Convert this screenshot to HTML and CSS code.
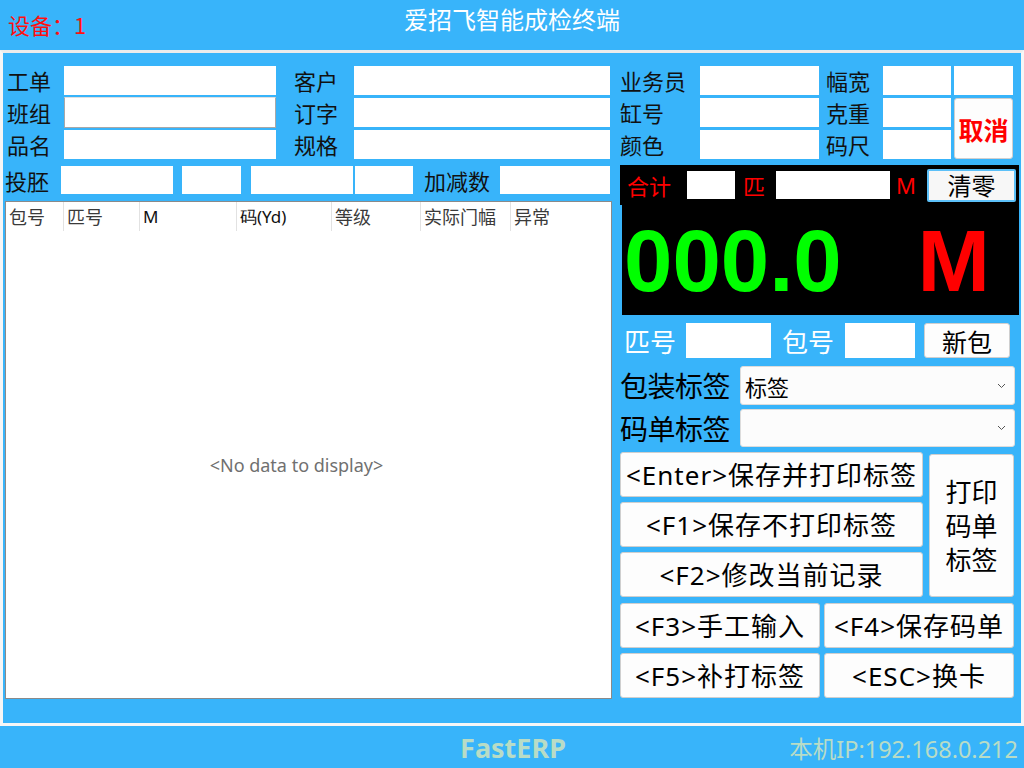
FILE: index.html
```html
<!DOCTYPE html>
<html lang="zh">
<head>
<meta charset="utf-8">
<title>爱招飞智能成检终端</title>
<link rel="stylesheet" href="styles.css">
</head>
<body>
<header class="topbar">
  <div class="device">设备：1</div>
  <div class="title">爱招飞智能成检终端</div>
  <div></div>
</header>
<main class="frame">
  <section class="left">
    <div class="form-grid">
      <label class="lbl">工单</label><div class="inp"></div>
      <label class="lbl lbl2">客户</label><div class="inp"></div>
      <label class="lbl">班组</label><div class="inp inp-focus"></div>
      <label class="lbl lbl2">订字</label><div class="inp"></div>
      <label class="lbl">品名</label><div class="inp"></div>
      <label class="lbl lbl2">规格</label><div class="inp"></div>
    </div>
    <div class="row4">
      <label class="lbl l-tp">投胚</label>
      <div class="inp w112"></div>
      <div class="inp w59"></div>
      <div class="inp w102"></div>
      <div class="inp w58"></div>
      <label class="lbl l-jj">加减数</label>
      <div class="inp w110"></div>
    </div>
    <div class="table">
      <div class="thead">
        <div class="th">包号</div>
        <div class="th">匹号</div>
        <div class="th latin">M</div>
        <div class="th latin">码(Yd)</div>
        <div class="th">等级</div>
        <div class="th">实际门幅</div>
        <div class="th last">异常</div>
      </div>
      <div class="tbody">&lt;No data to display&gt;</div>
    </div>
  </section>
  <section class="right">
    <div class="rgrid">
      <label class="lbl">业务员</label><div class="inp"></div>
      <label class="lbl lbl3">幅宽</label><div class="inp"></div>
      <div class="gap"></div><div class="inp"></div>
      <label class="lbl">缸号</label><div class="inp"></div>
      <label class="lbl lbl3">克重</label><div class="inp"></div>
      <div class="gap"></div><button class="btn cancel">取消</button>
      <label class="lbl">颜色</label><div class="inp"></div>
      <label class="lbl lbl3">码尺</label><div class="inp"></div>
    </div>
    <div class="meter">
      <div class="meter-bar">
        <span class="red-lbl hj">合计</span>
        <div class="inp w48"></div>
        <span class="red-lbl pi">匹</span>
        <div class="inp w114"></div>
        <span class="red-lbl m">M</span>
        <button class="btn clear">清零</button>
      </div>
      <div class="display">
        <span class="num">000.0</span>
        <span class="unit">M</span>
      </div>
    </div>
    <div class="pirow">
      <label class="wlbl l-ph">匹号</label>
      <div class="inp w85"></div>
      <label class="wlbl l-bh">包号</label>
      <div class="inp w70"></div>
      <button class="btn newpack">新包</button>
    </div>
    <div class="selrow s1">
      <label class="slbl">包装标签</label>
      <div class="select"><span>标签</span><svg class="chev" width="9" height="6" viewBox="0 0 9 6"><path d="M1 1 L4.5 4.5 L8 1" fill="none" stroke="#555" stroke-width="1"/></svg></div>
    </div>
    <div class="selrow s2">
      <label class="slbl">码单标签</label>
      <div class="select"><span></span><svg class="chev" width="9" height="6" viewBox="0 0 9 6"><path d="M1 1 L4.5 4.5 L8 1" fill="none" stroke="#555" stroke-width="1"/></svg></div>
    </div>
    <div class="btns-top">
      <button class="btn act">&lt;Enter&gt;保存并打印标签</button>
      <button class="btn act print">打印<br>码单<br>标签</button>
      <button class="btn act">&lt;F1&gt;保存不打印标签</button>
      <button class="btn act">&lt;F2&gt;修改当前记录</button>
    </div>
    <div class="btns-bot">
      <button class="btn act">&lt;F3&gt;手工输入</button>
      <button class="btn act">&lt;F4&gt;保存码单</button>
      <button class="btn act">&lt;F5&gt;补打标签</button>
      <button class="btn act">&lt;ESC&gt;换卡</button>
    </div>
  </section>
</main>
<footer class="footer">
  <div></div>
  <div class="brand">FastERP</div>
  <div class="ip">本机IP:192.168.0.212</div>
</footer>
</body>
</html>
```

FILE: styles.css
```css
* { box-sizing: border-box; margin: 0; padding: 0; }
html, body { width: 1024px; height: 768px; overflow: hidden; }
body {
  background: #38b4fa;
  font-family: "Noto Sans", "Noto Sans CJK SC", sans-serif;
  color: #000;
}
button { font-family: inherit; cursor: default; }

/* header */
.topbar {
  height: 50px;
  display: grid;
  grid-template-columns: 1fr auto 1fr;
}
.device {
  color: #ff1010;
  font-size: 22px;
  line-height: 30px;
  padding: 9px 0 0 8px;
  font-family: "Noto Sans CJK SC", sans-serif;
}
.title {
  color: #fff;
  font-size: 24px;
  line-height: 30px;
  padding-top: 4px;
  font-family: "Noto Sans CJK SC", sans-serif;
}

/* frame */
.frame {
  height: 676px;
  border: 3px solid #f6f6f6;
  border-top-color: #ececec;
  display: flex;
  gap: 8px;
}
.left {
  width: 609px;
  padding: 13px 0 0 2px;
}
.right {
  width: 401px;
  padding-top: 13px;
}

.lbl {
  font-family: "Noto Sans CJK SC", sans-serif;
  font-size: 22px;
  line-height: 29px;
  color: #111;
  white-space: nowrap;
}
.inp { background: #fff; height: 100%; }
.inp-focus { border: 1px solid #a8a8a8; border-top-color: #e0e0e0; margin: -1px 0; height: calc(100% + 2px); }

.form-grid {
  display: grid;
  grid-template-columns: 59px 212px 78px 256px;
  grid-template-rows: 29px 29px 29px;
  row-gap: 3px;
}
.form-grid .lbl { padding-left: 2px; }
.form-grid .lbl2 { padding-left: 18px; }

.row4 {
  margin-top: 7px;
  height: 28px;
  display: flex;
}
.row4 .lbl { line-height: 28px; }
.l-tp { width: 56px; }
.w112 { width: 112px; }
.w59 { width: 59px; margin-left: 9px; }
.w102 { width: 102px; margin-left: 10px; }
.w58 { width: 58px; margin-left: 2px; }
.l-jj { width: 87px; padding-left: 11px; }
.w110 { width: 110px; }

/* table */
.table {
  margin-top: 7px;
  height: 498px;
  width: 607px;
  background: #fff;
  border: 1px solid #8a8a8a;
  display: flex;
  flex-direction: column;
}
.thead {
  height: 29px;
  display: grid;
  grid-template-columns: 58px 76px 97px 95px 89px 90px 1fr;
}
.th {
  font-family: "Noto Sans CJK SC", sans-serif;
  font-size: 18px;
  line-height: 29px;
  color: #3a3a3a;
  padding-left: 3px;
  border-right: 1px solid #e2e2e2;
}
.th.latin { font-family: "Noto Sans", sans-serif; color: #111; font-size: 17px; }
.th.last { border-right: none; }
.tbody {
  flex: 1;
  display: flex;
  align-items: center;
  justify-content: center;
  padding-right: 24px;
  font-size: 18px;
  color: #707070;
}

/* right top grid */
.rgrid {
  display: grid;
  grid-template-columns: 80px 119px 64px 68px 3px 59px;
  grid-template-rows: 29px 29px 29px;
  row-gap: 3px;
}
.rgrid .lbl3 { padding-left: 7px; }
.rgrid .cancel {
  grid-column: 6;
  grid-row: 2 / span 2;
  color: #ff0000;
  font-weight: 700;
  font-size: 25px;
  font-family: "Noto Sans CJK SC", sans-serif;
}

.btn {
  background: #fdfdfd;
  border: 1px solid #cfcfcf;
  border-radius: 3px;
  color: #000;
}

/* meter */
.meter {
  margin-top: 6px;
  width: 399px;
}
.meter-bar {
  height: 40px;
  background: #000;
  display: flex;
  align-items: center;
  padding-left: 7px;
}
.meter-bar .inp { height: 28px; }
.red-lbl {
  color: #ff0000;
  font-size: 22px;
  font-family: "Noto Sans CJK SC", sans-serif;
  line-height: 28px;
}
.hj { width: 60px; }
.w48 { width: 48px; }
.pi { width: 33px; margin-left: 8px; }
.w114 { width: 114px; }
.m { width: 37px; padding-left: 6px; font-family: "Noto Sans", sans-serif; }
.clear {
  width: 89px;
  height: 33px;
  border: 2px solid #5cc0f8;
  border-radius: 2px;
  background: #f7f7f7;
  font-size: 24px;
  line-height: 28px;
  font-family: "Noto Sans CJK SC", sans-serif;
}
.display {
  height: 110px;
  margin-left: 2px;
  background: #000;
  display: flex;
  align-items: center;
  justify-content: space-between;
  padding: 0 29px 0 2px;
  font-family: "Liberation Sans", Arial, sans-serif;
  font-weight: 700;
  font-size: 87px;
  line-height: 1;
}
.num { color: #00ff00; }
.unit { color: #ff0000; }

/* pi row */
.pirow {
  margin-top: 8px;
  height: 35px;
  display: flex;
  align-items: stretch;
}
.wlbl {
  color: #fff;
  font-size: 26px;
  line-height: 35px;
  font-family: "Noto Sans CJK SC", sans-serif;
}
.l-ph { width: 66px; padding-left: 4px; }
.w85 { width: 85px; }
.l-bh { width: 74px; padding-left: 11px; }
.w70 { width: 70px; }
.newpack {
  width: 86px;
  margin-left: 9px;
  font-size: 25px;
  font-family: "Noto Sans CJK SC", sans-serif;
  line-height: 30px;
}

/* select rows */
.selrow { display: flex; }
.s1 { margin-top: 8px; height: 39px; }
.s2 { margin-top: 4px; height: 38px; }
.slbl {
  width: 120px;
  font-size: 28px;
  line-height: 38px;
  font-family: "Noto Sans CJK SC", sans-serif;
  white-space: nowrap;
  letter-spacing: -0.5px;
}
.select {
  width: 275px;
  background: #fcfcfc;
  border: 1px solid #dcdcdc;
  border-radius: 3px;
  display: flex;
  align-items: center;
  justify-content: space-between;
  padding: 0 8px 0 4px;
  font-size: 22px;
  font-family: "Noto Sans CJK SC", sans-serif;
}

/* action buttons */
.act {
  font-size: 26px;
  letter-spacing: 1px;
  white-space: nowrap;
  line-height: 34px;
  padding: 0;
}
.btns-top {
  margin-top: 5px;
  display: grid;
  grid-template-columns: 303px 85px;
  grid-template-rows: 45px 45px 45px;
  column-gap: 6px;
  row-gap: 5px;
}
.print {
  grid-column: 2;
  grid-row: 1 / span 3;
  margin-top: 2px;
  line-height: 34px;
  letter-spacing: 0;
}
.btns-bot {
  margin-top: 6px;
  display: grid;
  grid-template-columns: 200px 190px;
  grid-template-rows: 45px 45px;
  column-gap: 4px;
  row-gap: 5px;
}

/* footer */
.footer {
  height: 42px;
  display: grid;
  grid-template-columns: 1fr auto 1fr;
  align-items: center;
}
.brand {
  color: #b8dcc6;
  font-weight: 700;
  font-size: 27px;
  line-height: 42px;
  padding-left: 2px;
}
.ip {
  justify-self: end;
  color: #b8dcc6;
  font-size: 23.5px;
  line-height: 42px;
  padding: 2px 6px 0 0;
  font-family: "Noto Sans", "Noto Sans CJK SC", sans-serif;
}
```
